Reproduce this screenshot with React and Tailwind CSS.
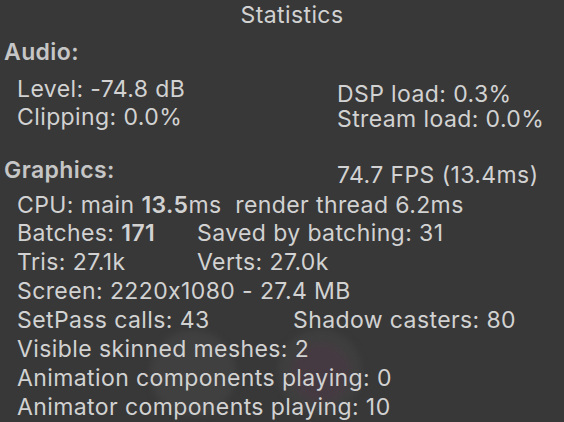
import React from 'react'

function Row({ children, className = '' }) {
  return <div className={`flex whitespace-nowrap ${className}`}>{children}</div>
}

export default function App() {
  return (
    <div className="relative w-[564px] h-[422px] overflow-hidden bg-[#383838] text-[#d2d2d2] text-[23px] tracking-[0.4px] font-['Inter','Noto_Sans',sans-serif] [font-feature-settings:'calt'_0]">
      {/* scene showing through the panel */}
      <div className="absolute left-[150px] top-[330px] w-[86px] h-[86px] rounded-full bg-[#404040] blur-[3px]" />
      <div className="absolute left-[278px] top-[330px] w-[84px] h-[84px] rounded-full bg-[#3f3f3f] blur-[3px]" />
      <div className="absolute left-[292px] top-[344px] w-[58px] h-[58px] rounded-full bg-[#463a42] blur-[4px]" />

      <div className="relative pt-[1px]">
        <div className="leading-[29px] text-center pl-[20px]">Statistics</div>

        {/* Audio */}
        <div className="mt-[8px] pl-[4px] leading-[29px] font-semibold text-[#c6c6c6]">Audio:</div>
        <div className="flex mt-[7.5px]">
          <div className="w-[337px] pl-[17px] leading-[28px]">
            <div>Level: -74.8 dB</div>
            <div>Clipping: 0.0%</div>
          </div>
          <div className="mt-[7px] leading-[25px]">
            <div>DSP load: 0.3%</div>
            <div>Stream load: 0.0%</div>
          </div>
        </div>

        {/* Graphics */}
        <div className="flex items-start mt-[24px] h-[35px]">
          <div className="w-[337px] pl-[4px] leading-[29px] font-semibold text-[#c6c6c6]">Graphics:</div>
          <div className="mt-[5px] leading-[29px]">74.7 FPS (13.4ms)</div>
        </div>

        <div className="pl-[17px] leading-[28.86px]">
          <Row>
            CPU: main&nbsp;<span className="font-semibold">13.5</span>ms&nbsp;&nbsp;render thread 6.2ms
          </Row>
          <Row>
            <span className="w-[180px]">
              Batches: <span className="font-semibold">171</span>
            </span>
            <span>Saved by batching: 31</span>
          </Row>
          <Row>
            <span className="w-[180px]">Tris: 27.1k</span>
            <span>Verts: 27.0k</span>
          </Row>
          <Row>Screen: 2220x1080 - 27.4 MB</Row>
          <Row>
            <span className="w-[276px]">SetPass calls: 43</span>
            <span>Shadow casters: 80</span>
          </Row>
          <Row>Visible skinned meshes: 2</Row>
          <Row>Animation components playing: 0</Row>
          <Row>Animator components playing: 10</Row>
        </div>
      </div>
    </div>
  )
}
